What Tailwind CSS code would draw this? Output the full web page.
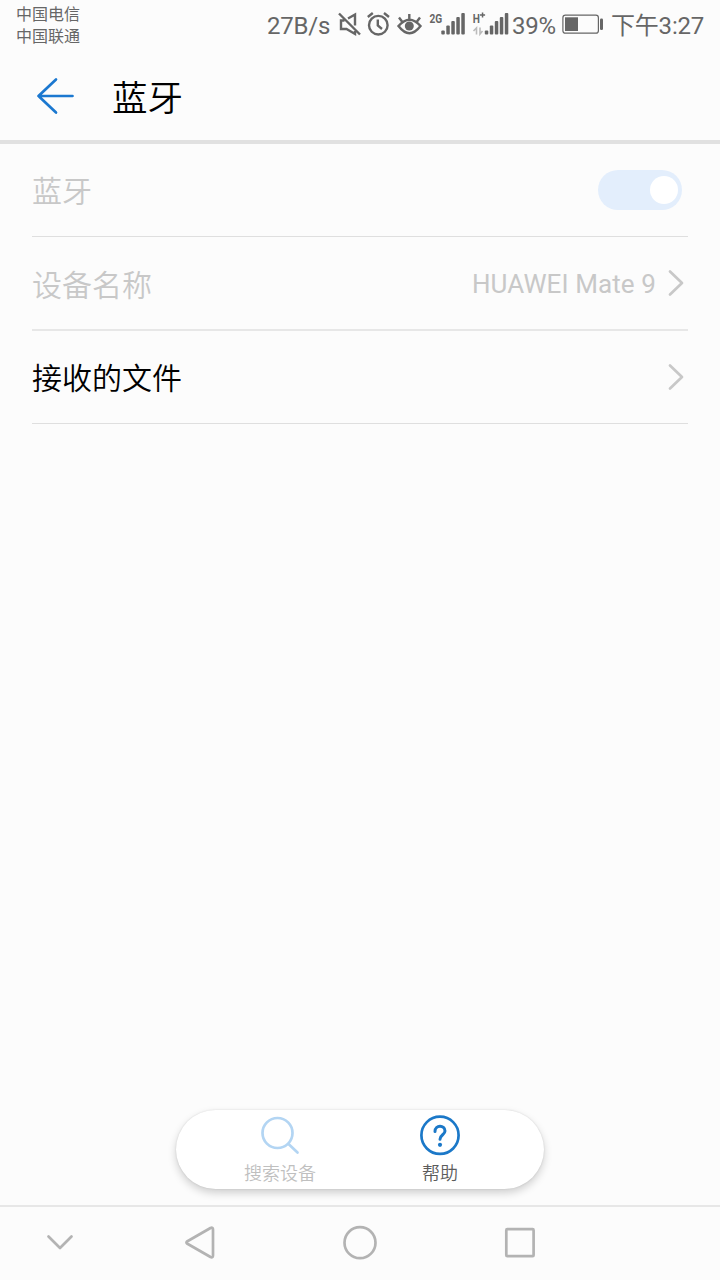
<!DOCTYPE html>
<html lang="zh-CN">
<head>
<meta charset="utf-8">
<title>蓝牙</title>
<script src="https://cdn.jsdelivr.net/npm/@tailwindcss/browser@4"></script>
</head>
<body class="bg-[#fcfcfc] font-['Roboto','Noto_Sans_CJK_SC',sans-serif]">
<div class="flex h-[1280px] w-[720px] flex-col overflow-hidden">
  <!-- Status bar -->
  <div class="flex h-[50px] shrink-0 items-center pl-4 text-[#666]">
    <div class="flex h-[50px] w-[251px] flex-col pt-1 text-[16px] leading-[22px]">
      <span>中国电信</span><span>中国联通</span>
    </div>
    <span class="w-[67px] pt-px text-[24px] leading-[50px] tracking-[-0.200px] whitespace-nowrap">27B/s</span>
    <svg class="h-[50px] w-[178px] shrink-0" viewBox="334 0 178 50" fill="none" stroke="#666" stroke-width="2.400">
      <path d="M339 13.500 360 34.500M344.500 20.500H341V29H346.500L355 34V31M348 18.500 355 14.500V25.500"/>
      <circle cx="378.300" cy="25.200" r="9.300"/>
      <path d="M377.800 19.500V25.500L382 29M367.800 17 372.800 13M389 17 384 13"/>
      <path d="M398.500 26Q409.500 13.500 420.500 26Q409.500 40.500 398.500 26ZM409.300 19.500V14M402 21.500 399 17.500M417 21.500 420 17.500"/>
      <circle cx="409.300" cy="26" r="4.500" fill="#666" stroke="none"/>
      <g fill="#666" stroke="none">
        <text transform="translate(429.500 22.700) scale(0.750 1)" font-size="13.500" font-weight="700">2G</text>
        <rect x="441.300" y="30.500" width="3.500" height="4" rx="1"/><rect x="446.300" y="25.500" width="3.500" height="9" rx="1"/><rect x="451.300" y="21" width="3.500" height="13.500" rx="1"/><rect x="456.300" y="17" width="3.500" height="17.500" rx="1"/><rect x="461.300" y="13" width="3.500" height="21.500" rx="1"/>
        <text transform="translate(472.700 22.700) scale(0.750 1)" font-size="13.500" font-weight="700">H</text>
        <path d="M480 14.200h1.800v-1.800h1.500v1.800h1.800v1.500h-1.800v1.800h-1.500v-1.800h-1.800z"/>
        <rect x="484.800" y="30.500" width="3.500" height="4" rx="1"/><rect x="489.800" y="25.500" width="3.500" height="9" rx="1"/><rect x="494.800" y="21" width="3.500" height="13.500" rx="1"/><rect x="499.800" y="17" width="3.500" height="17.500" rx="1"/><rect x="504.800" y="13" width="3.500" height="21.500" rx="1"/>
      </g>
      <path stroke="#bbb" stroke-width="1.600" d="M476.500 34.500V28L473.500 31M480 27.500V34L482.500 31"/>
    </svg>
    <span class="w-[50px] pt-px text-[24px] leading-[50px] tracking-[-0.200px] whitespace-nowrap">39%</span>
    <svg class="h-[50px] w-[49px] shrink-0" viewBox="562 0 49 50">
      <rect x="562.900" y="15.200" width="35.500" height="18" rx="2.500" fill="none" stroke="#666" stroke-width="1.200"/>
      <rect x="565" y="17.300" width="13" height="13.700" fill="#666"/>
      <rect x="600" y="18.500" width="3" height="11.500" rx="1.300" fill="#666"/>
    </svg>
    <span class="pt-px text-[24px] leading-[50px] tracking-[-0.200px] whitespace-nowrap">下午3:27</span>
  </div>

  <!-- Title bar -->
  <div class="flex h-[94px] shrink-0 items-center border-b-4 border-[#e1e1e1] pt-0.5 pl-9">
    <svg class="h-10 w-10" viewBox="36 76 40 40" fill="none" stroke="#1b78d0" stroke-width="2.700" stroke-linecap="round" stroke-linejoin="round"><path d="M72.500 96H38.500M56 79.500 38.500 96 56 112.500"/></svg>
    <h1 class="ml-9 pt-1.5 text-[35.500px] leading-[50px] font-[350]">蓝牙</h1>
  </div>

  <!-- Settings -->
  <div class="mx-8 flex flex-col text-[30px]">
    <div class="flex h-[93px] items-center justify-between border-b border-[#dfdfdf] pr-1.5 font-[350] text-[#c8c8c8]">
      <span class="pt-[3px]">蓝牙</span>
      <div class="flex h-10 w-[84px] items-center justify-end rounded-full bg-[#e3eefc] pr-1"><div class="size-7 rounded-full bg-white"></div></div>
    </div>
    <div class="flex h-[94px] items-center border-b-2 border-[#e7e7e7] font-[350] text-[#c8c8c8]">
      <span class="pt-1">设备名称</span>
      <span class="ml-auto pt-0.5 text-[26px] font-normal tracking-[0.1px]">HUAWEI Mate 9</span>
      <svg class="mr-1 ml-3 h-7 w-4" viewBox="0 0 16 28" fill="none" stroke="#c8c8c8" stroke-width="2.700" stroke-linecap="round" stroke-linejoin="round"><path d="M2 2.500 14 14 2 25.500"/></svg>
    </div>
    <div class="flex h-[93px] items-center justify-between border-b border-[#dfdfdf] text-black">
      <span class="pt-0.5 font-[350]">接收的文件</span>
      <svg class="mr-1 h-7 w-4" viewBox="0 0 16 28" fill="none" stroke="#c8c8c8" stroke-width="2.700" stroke-linecap="round" stroke-linejoin="round"><path d="M2 2.500 14 14 2 25.500"/></svg>
    </div>
  </div>

  <!-- Floating actions -->
  <div class="mt-auto mb-4 flex h-[79px] w-[368px] shrink-0 justify-center self-center rounded-full bg-white text-[18px] leading-[26px] font-[350] shadow-[0_4px_8px_rgba(0,0,0,0.18),0_0_2px_rgba(0,0,0,0.12)]">
    <div class="flex w-40 flex-col items-center pt-1.5 text-[#bfbfbf]">
      <svg class="h-10 w-10" viewBox="260 1116 40 40" fill="none" stroke="#b3d5f3" stroke-width="2.700" stroke-linecap="round"><circle cx="277.500" cy="1133" r="15"/><path d="M288.500 1144 297.500 1152.500"/></svg>
      <span class="mt-[5px]">搜索设备</span>
    </div>
    <div class="flex w-40 flex-col items-center pt-1.5 text-[#5c5c5c]">
      <svg class="h-10 w-10 overflow-visible" viewBox="420 1116 40 40" fill="none" stroke="#1b78c8" stroke-width="2.700" stroke-linecap="round"><circle cx="440" cy="1135.300" r="18.600"/><path stroke-width="3" d="M435 1131.500C435 1124.500 445 1124.700 445 1131C445 1134.800 440 1134.800 440 1139.300"/><circle cx="440" cy="1144.800" r="2.100" fill="#1b78c8" stroke="none"/></svg>
      <span class="mt-[5px]">帮助</span>
    </div>
  </div>

  <!-- Navigation -->
  <div class="h-[75px] shrink-0 border-t-2 border-[#e7e7e7]">
    <svg class="h-[73px] w-[720px]" viewBox="0 1207 720 73" fill="none" stroke="#b3b3b3" stroke-width="2.700" stroke-linecap="round" stroke-linejoin="round">
      <path d="M48.500 1236.500 60 1248 71.500 1236.500M187 1241.500 210.500 1228Q213 1227 213 1229.500V1255.500Q213 1258 210.500 1257L187 1243.500Q186 1242.500 187 1241.500"/>
      <circle cx="360" cy="1242.700" r="15.500"/>
      <rect x="506.300" y="1229.200" width="27.300" height="27" rx="1"/>
    </svg>
  </div>
</div>
</body>
</html>
